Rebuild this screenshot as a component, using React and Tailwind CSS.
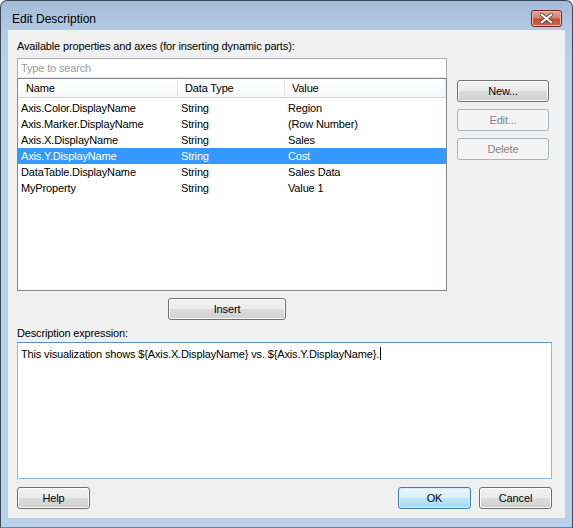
import clsx from 'clsx';

const rows = [
  { name: 'Axis.Color.DisplayName', type: 'String', value: 'Region' },
  { name: 'Axis.Marker.DisplayName', type: 'String', value: '(Row Number)' },
  { name: 'Axis.X.DisplayName', type: 'String', value: 'Sales' },
  { name: 'Axis.Y.DisplayName', type: 'String', value: 'Cost', selected: true },
  { name: 'DataTable.DisplayName', type: 'String', value: 'Sales Data' },
  { name: 'MyProperty', type: 'String', value: 'Value 1' },
];

function Btn({ children, className, disabled, def }) {
  return (
    <div
      className={clsx(
        'flex items-center justify-center rounded-[3px] border text-[11px]',
        disabled
          ? 'border-[#adb2b5] bg-[#f4f4f4] text-[#838383]'
          : def
          ? 'border-[#3c7fb1] bg-[linear-gradient(to_bottom,#eaf6fd_0%,#d9f0fc_50%,#bee6fd_50%,#a7d9f5_100%)] shadow-[inset_0_0_0_1px_#d6ecf8] text-black'
          : 'border-[#707070] bg-[linear-gradient(to_bottom,#f2f2f2_0%,#ebebeb_50%,#dddddd_50%,#cfcfcf_100%)] shadow-[inset_0_0_0_1px_#fcfcfc] text-black',
        className
      )}
    >
      {children}
    </div>
  );
}

export default function App() {
  return (
    <div className="w-[573px] h-[528px] bg-white font-['Liberation_Sans',Arial,sans-serif] tracking-[-0.15px]">
      <div className="w-[573px] h-[528px] flex flex-col rounded-t-[7px] border border-[#3a4857] border-b-[#1aa3c4] bg-[linear-gradient(to_bottom,#a3bcd8_0px,#b4cbe5_30px,#b9d1ea_60px)]">
        {/* title bar */}
        <div className="h-[29px] flex items-start justify-between">
          <div className="pl-[11px] pt-[11px] text-[12px] leading-[15px] tracking-normal text-black">Edit Description</div>
          <div className="mt-[9px] mr-[10px] w-[31px] h-[17px] rounded-[3px] border border-[#6e2a22] bg-[linear-gradient(to_bottom,#e8a493_0%,#d88270_45%,#c44a32_55%,#d06a48_100%)] shadow-[inset_0_0_0_1px_#eab7aa] flex items-center justify-center">
            <svg width="13" height="11" viewBox="0 0 13 11">
              <path d="M1.5 1.5 L11.5 9.5 M11.5 1.5 L1.5 9.5" stroke="#5a4a4a" strokeWidth="3.6" strokeLinecap="round" />
              <path d="M1.5 1.5 L11.5 9.5 M11.5 1.5 L1.5 9.5" stroke="#ffffff" strokeWidth="2" strokeLinecap="round" />
            </svg>
          </div>
        </div>

        {/* client area */}
        <div className="ml-[7px] mr-[7px] h-[488px] bg-[#f0f0f0] flex flex-col pl-[9px] text-[11px] text-black">
          <div className="mt-[10px] h-[13px] leading-[13px]">Available properties and axes (for inserting dynamic parts):</div>

          <div className="mt-[5px] flex">
            <div className="w-[430px] flex flex-col">
              <div className="h-[20px] border border-[#abadb3] border-b-[#e3e9ef] bg-white flex items-center pl-[3px] text-[#9a9a9a]">
                Type to search
              </div>
              <div className="h-[213px] border border-[#828790] bg-white flex flex-col">
                <div className="h-[19px] flex border-b border-[#d5d5d5] bg-[linear-gradient(to_bottom,#ffffff,#f7f8fa)]">
                  <div className="w-[160px] pl-[8px] flex items-center border-r border-[#e5e5e5]">Name</div>
                  <div className="w-[107px] pl-[7px] flex items-center border-r border-[#e5e5e5]">Data Type</div>
                  <div className="flex-1 pl-[7px] flex items-center border-r border-[#e5e5e5]">Value</div>
                </div>
                <div className="pt-[2px] flex flex-col">
                  {rows.map((r) => (
                    <div
                      key={r.name}
                      className={clsx(
                        'h-[16px] flex items-center',
                        r.selected ? 'bg-[#3399ff] text-white' : 'text-black'
                      )}
                    >
                      <div className="w-[160px] pl-[3px]">{r.name}</div>
                      <div className="w-[107px] pl-[3px]">{r.type}</div>
                      <div className="flex-1 pl-[3px]">{r.value}</div>
                    </div>
                  ))}
                </div>
              </div>
            </div>

            <div className="ml-[10px] pt-[22px] flex flex-col gap-[7px]">
              <Btn className="w-[92px] h-[22px]">New...</Btn>
              <Btn className="w-[92px] h-[22px]" disabled>Edit...</Btn>
              <Btn className="w-[92px] h-[22px]" disabled>Delete</Btn>
            </div>
          </div>

          <Btn className="mt-[7px] ml-[151px] w-[118px] h-[22px]">Insert</Btn>

          <div className="mt-[7px] h-[13px] leading-[13px]">Description expression:</div>

          <div className="mt-[2px] w-[535px] h-[137px] border border-[#8fb8de] border-t-[#5a8fc4] bg-white pl-[3px] pt-[3px]">
            <span className="leading-[13px]">This visualization shows ${'{'}Axis.X.DisplayName{'}'} vs. ${'{'}Axis.Y.DisplayName{'}'}.</span>
            <span className="inline-block w-[1px] h-[13px] bg-black align-[-2px] ml-[1px]"></span>
          </div>

          <div className="mt-[8px] flex w-[535px]">
            <Btn className="w-[73px] h-[22px]">Help</Btn>
            <div className="flex-1"></div>
            <Btn className="w-[73px] h-[22px]" def>OK</Btn>
            <Btn className="ml-[8px] w-[73px] h-[22px]">Cancel</Btn>
          </div>
        </div>
      </div>
    </div>
  );
}
